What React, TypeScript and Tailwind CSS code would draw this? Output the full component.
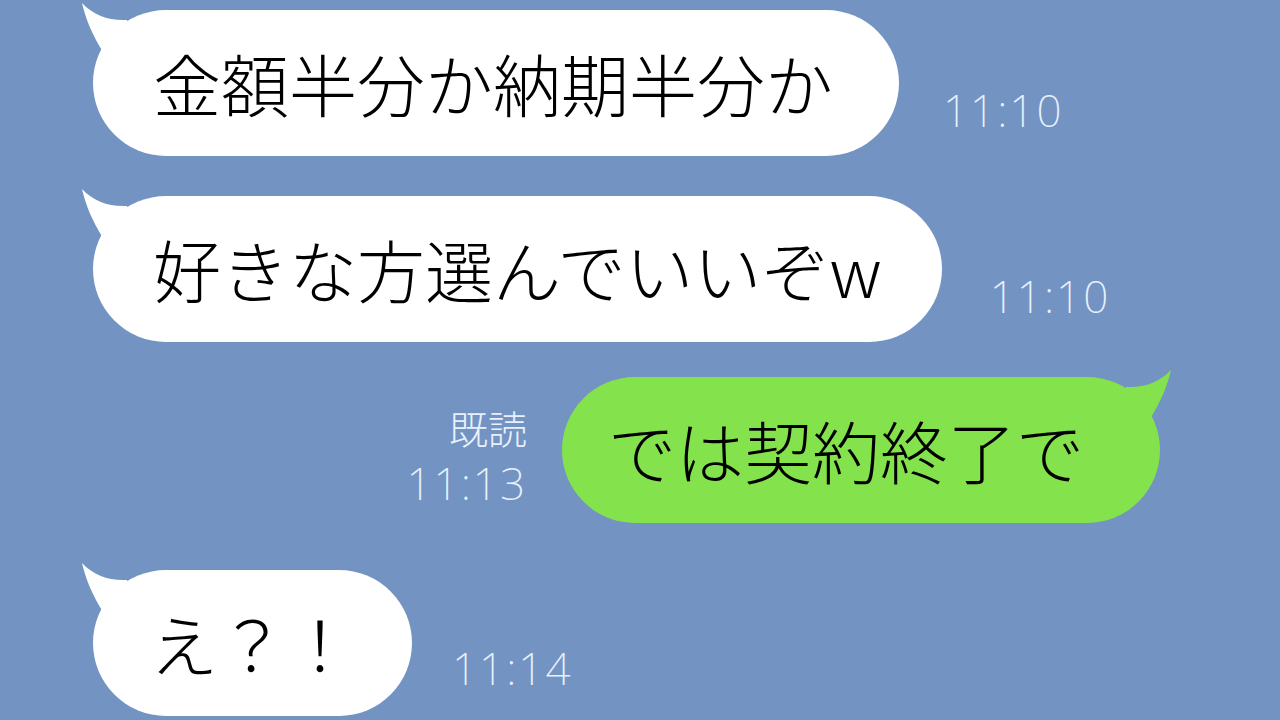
import React from 'react'

const jp = { fontFamily: '"Noto Sans CJK JP", "Noto Sans", sans-serif' }
const thin = { fontFamily: '"Noto Sans", "Noto Sans CJK JP", sans-serif' }

// little horn on the top corner of a speech bubble
const Tail = ({ side, color }: { side: 'left' | 'right'; color: string }) => (
  <svg
    width="60"
    height="56"
    viewBox="0 0 60 56"
    className={side === 'left' ? 'absolute -left-[12px] -top-[8px]' : 'absolute -right-[12px] -top-[8px] -scale-x-100'}
  >
    <path d="M1 1 C 5 18 11 32 22 50 L 50 30 L 46 18 C 28 19 12 13 1 1 Z" fill={color} />
  </svg>
)

interface BubbleProps {
  text: string
  side: 'left' | 'right'
  className?: string
}

const Bubble = ({ text, side, className }: BubbleProps) => {
  const color = side === 'left' ? '#ffffff' : '#84e24c'
  return (
    <div
      className={`relative h-[146px] rounded-full flex items-center text-[68px] leading-none font-light text-black ${className ?? ''}`}
      style={{ ...jp, backgroundColor: color }}
    >
      <Tail side={side} color={color} />
      <span className="relative">{text}</span>
    </div>
  )
}

const Time = ({ value, className }: { value: string; className?: string }) => (
  <span
    className={`text-[44px] leading-none font-extralight tracking-[2px] text-[#e8f1fb] ${className ?? ''}`}
    style={thin}
  >
    {value}
  </span>
)

export default function App() {
  return (
    <div className="w-[1280px] h-[720px] overflow-hidden bg-[#7394c3] flex flex-col pt-[10px]">
      <div className="flex items-end pl-[93px]">
        <Bubble side="left" text="金額半分か納期半分か" className="pl-[60px] pr-[66px]" />
        <Time value="11:10" className="ml-[44px] mb-[24px]" />
      </div>

      <div className="flex items-end pl-[93px] mt-[40px]">
        <Bubble side="left" text="好きな方選んでいいぞw" className="pl-[60px] pr-[60px]" />
        <Time value="11:10" className="ml-[48px] mb-[24px]" />
      </div>

      <div className="flex items-end justify-end pr-[120px] mt-[35px]">
        <div className="flex flex-col items-end mr-[35px] mb-[18px] gap-[14px]">
          <span className="text-[39px] leading-none font-light text-[#e8f1fb]" style={jp}>
            既読
          </span>
          <Time value="11:13" />
        </div>
        <Bubble side="right" text="では契約終了で" className="pl-[46px] pr-[76px]" />
      </div>

      <div className="flex items-end pl-[93px] mt-[47px]">
        <Bubble side="left" text="え？！" className="pl-[57px] pr-[58px]" />
        <Time value="11:14" className="ml-[40px] mb-[26px]" />
      </div>
    </div>
  )
}
